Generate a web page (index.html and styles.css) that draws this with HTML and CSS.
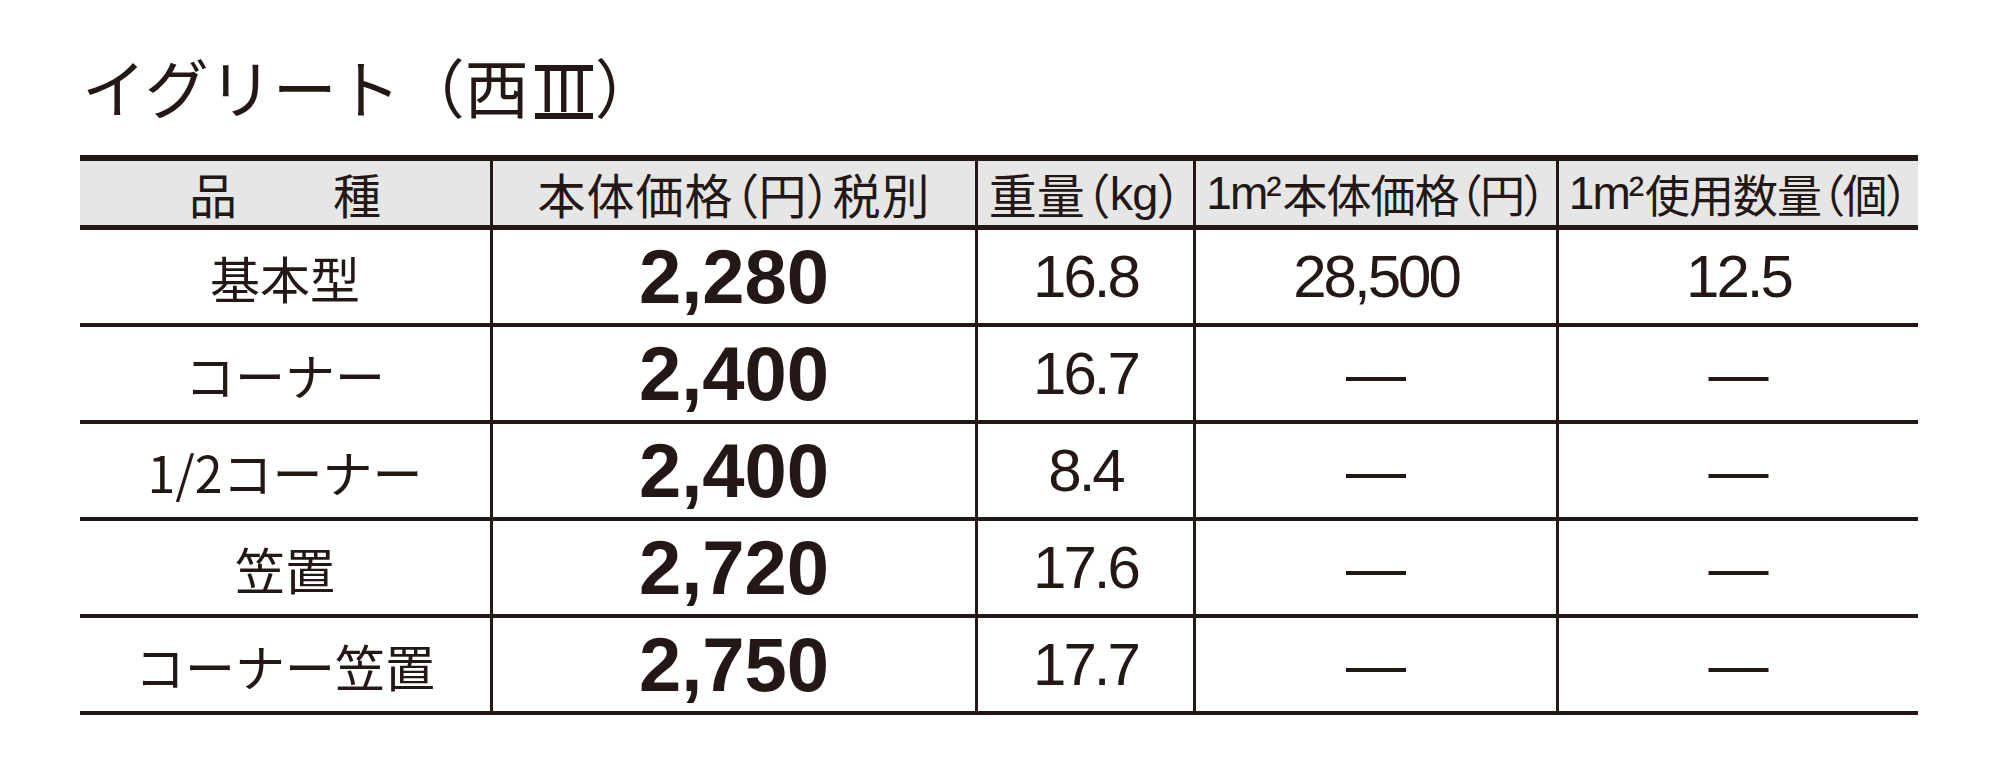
FILE: index.html
```html
<!DOCTYPE html>
<html lang="ja">
<head>
<meta charset="utf-8">
<title>イグリート（西Ⅲ）</title>
<link rel="stylesheet" href="styles.css">
</head>
<body>
<main class="page">
  <h1 class="title">イグリート<span class="tpar">（</span>西<span class="roman">Ⅲ</span><span class="tpar">）</span></h1>
  <div class="table">
    <div class="row head">
      <div class="cell">品　　種</div>
      <div class="cell wide">本体価格<span class="par">（</span>円<span class="par">）</span>税別</div>
      <div class="cell">重量<span class="par">（</span><span class="lat">kg</span><span class="par">）</span></div>
      <div class="cell tight"><span class="lat">1m²</span>本体価格<span class="par">（</span>円<span class="par">）</span></div>
      <div class="cell tight"><span class="lat">1m²</span>使用数量<span class="par">（</span>個<span class="par">）</span></div>
    </div>
    <div class="row">
      <div class="cell name">基本型</div>
      <div class="cell price">2,280</div>
      <div class="cell num">16.8</div>
      <div class="cell num">28,500</div>
      <div class="cell num">12.5</div>
    </div>
    <div class="row">
      <div class="cell name">コーナー</div>
      <div class="cell price">2,400</div>
      <div class="cell num">16.7</div>
      <div class="cell dash">—</div>
      <div class="cell dash">—</div>
    </div>
    <div class="row">
      <div class="cell name">1/2コーナー</div>
      <div class="cell price">2,400</div>
      <div class="cell num">8.4</div>
      <div class="cell dash">—</div>
      <div class="cell dash">—</div>
    </div>
    <div class="row">
      <div class="cell name">笠置</div>
      <div class="cell price">2,720</div>
      <div class="cell num">17.6</div>
      <div class="cell dash">—</div>
      <div class="cell dash">—</div>
    </div>
    <div class="row">
      <div class="cell name">コーナー笠置</div>
      <div class="cell price">2,750</div>
      <div class="cell num">17.7</div>
      <div class="cell dash">—</div>
      <div class="cell dash">—</div>
    </div>
  </div>
</main>
</body>
</html>
```

FILE: styles.css
```css
html, body {
  margin: 0;
  padding: 0;
  background: #ffffff;
}

body {
  color: #231815;
  font-family: "Noto Sans CJK JP", "Noto Sans", sans-serif;
}

.page {
  width: 1992px;
  padding: 53px 0 0 80px;
  box-sizing: border-box;
}

.title {
  margin: 0 0 38px 0;
  padding-left: 2px;
  font-size: 64px;
  font-weight: 400;
  line-height: 1;
  height: 64px;
  white-space: nowrap;
}

.tpar {
  font-size: 64px;
}

.roman {
  display: inline-block;
  box-sizing: content-box;
  height: 42px;
  padding: 0 1px;
  margin: 0 2px 0 6px;
  border-top: 6px solid #231815;
  border-bottom: 6px solid #231815;
  font-size: 56px;
  line-height: 34px;
  vertical-align: 1px;
}

.table {
  width: 1838px;
  border-top: 6px solid #231815;
}

.row {
  display: grid;
  grid-template-columns: 410px 485px 218px 363px 362px;
  height: 93px;
  border-bottom: 4px solid #231815;
}

.row.head {
  height: 64px;
  border-bottom-width: 5px;
  background: #e6e6e6;
}

.cell {
  display: flex;
  align-items: center;
  justify-content: center;
  line-height: 1;
  white-space: nowrap;
}

.cell + .cell {
  border-left: 3px solid #231815;
}

.head .cell {
  font-size: 48px;
}

.head .cell.wide {
  letter-spacing: 1px;
}

.head .cell.tight {
  font-size: 45px;
  letter-spacing: -1px;
}

.par {
  font-feature-settings: "palt" 1;
}

.lat {
  font-family: "Liberation Sans", sans-serif;
  font-size: 47px;
  letter-spacing: -1px;
  padding: 0 1px;
}

.tight .lat {
  font-size: 46px;
  letter-spacing: -2px;
  padding: 0 3px 0 0;
}

.name {
  font-size: 50px;
}

.price {
  font-family: "Liberation Sans", Arial, sans-serif;
  font-weight: 700;
  font-size: 76px;
}

.num {
  font-family: "Liberation Sans", Arial, sans-serif;
  font-size: 60px;
  letter-spacing: -3px;
}

.dash {
  font-family: "Liberation Sans", Arial, sans-serif;
  font-size: 60px;
}
```
